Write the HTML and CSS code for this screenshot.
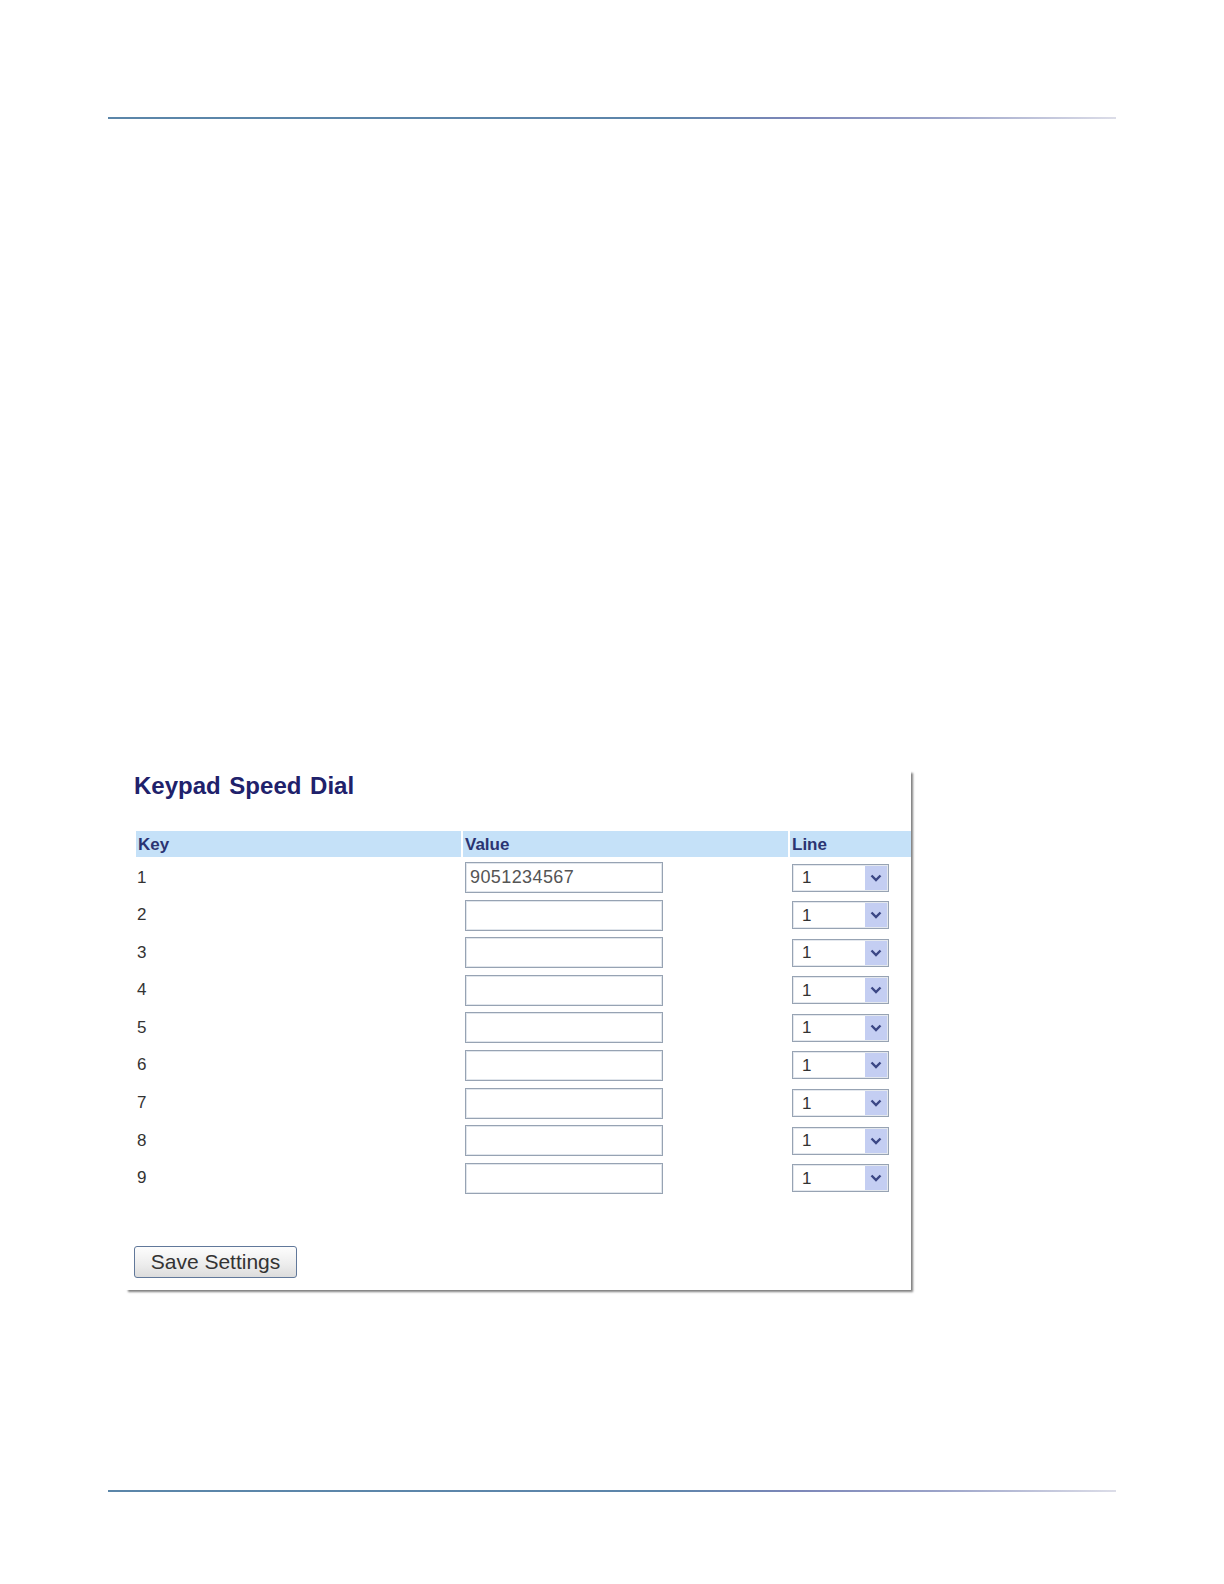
FILE: index.html
```html
<!DOCTYPE html>
<html>
<head>
<meta charset="utf-8">
<title>Keypad Speed Dial</title>
<link rel="stylesheet" href="styles.css">
</head>
<body>
  <div class="rule rule-top"></div>

  <div class="panel">
    <h2 class="panel-title">Keypad Speed Dial</h2>

    <div class="grid head">
      <div class="cell">Key</div>
      <div class="cell">Value</div>
      <div class="cell">Line</div>
    </div>

    <div class="rows" id="rows"></div>

    <button class="save-btn" type="button">Save Settings</button>
  </div>

  <div class="rule rule-bottom"></div>

  <script>
    var values = ["9051234567", "", "", "", "", "", "", "", ""];
    var rows = document.getElementById("rows");

    for (var i = 0; i < values.length; i++) {
      var row = document.createElement("div");
      row.className = "grid row";
      row.innerHTML =
        '<div class="key">' + (i + 1) + '</div>' +
        '<div><input class="value-box" type="text" value="' + values[i] + '"></div>' +
        '<div><div class="line-select"><select><option>1</option><option>2</option></select>' +
        '<span class="arrow"><svg width="12" height="8" viewBox="0 0 12 8"><path d="M1.5 1.5 L6 6 L10.5 1.5" fill="none" stroke="#3b4785" stroke-width="2.4"/></svg></span></div></div>';
      rows.appendChild(row);
    }
  </script>
</body>
</html>
```

FILE: styles.css
```css
body {
  margin: 0;
  padding: 0;
  background-color: #fff;
  font-family: "Liberation Sans", Arial, sans-serif;
  color: #333;
}

.rule {
  width: 1008px;
  height: 2px;
  margin-left: 108px;
  background: linear-gradient(to right, #5b86a9 0%, #5d85aa 55%, #7c86b8 68%, #9aa2c8 82%, #dcdde8 100%);
}

.rule-top {
  margin-top: 117px;
}

.rule-bottom {
  margin-top: 200px;
}

.panel {
  width: 777px;
  margin-top: 650px;
  margin-left: 124px;
  padding: 3px 0 12px 10px;
  background-color: #fff;
  box-shadow: 3px 3px 2px -1px rgba(0, 0, 0, 0.5);
}

.panel-title {
  margin: 0;
  font-size: 24px;
  line-height: 28px;
  word-spacing: 2px;
  font-weight: bold;
  color: #20216b;
}

.grid {
  display: grid;
  grid-template-columns: 325px 325px 121px;
  column-gap: 2px;
  margin-left: 2px;
}

.head {
  margin-top: 31px;
}

.head .cell {
  height: 24px;
  padding: 2px 0 0 2px;
  line-height: 24px;
  font-size: 17px;
  font-weight: bold;
  color: #2b3472;
  background-color: #c5e1f8;
}

.rows {
  display: flex;
  flex-direction: column;
  gap: 6.6px;
  margin-top: 5px;
}

.row {
  height: 31px;
  align-items: center;
}

.key {
  padding-left: 1px;
  font-size: 17px;
  color: #333;
}

.value-box {
  display: block;
  box-sizing: border-box;
  width: 198px;
  height: 31px;
  margin: 0 0 0 2px;
  padding: 0 4px;
  border: 1px solid #97a3b3;
  box-shadow: inset 0 0 0 1px #e1e6ec;
  border-radius: 0;
  font-family: "Liberation Sans", Arial, sans-serif;
  font-size: 18px;
  letter-spacing: 0.4px;
  color: #555;
  background-color: #fff;
  outline: none;
}

.line-select {
  position: relative;
  width: 97px;
  height: 28px;
  margin-left: 2px;
}

.line-select select {
  appearance: none;
  -webkit-appearance: none;
  box-sizing: border-box;
  width: 97px;
  height: 28px;
  margin: 0;
  padding: 0 0 0 9px;
  border: 1px solid #97a3b3;
  box-shadow: inset 0 0 0 1px #e4e8ee;
  border-radius: 0;
  background-color: #fff;
  font-family: "Liberation Sans", Arial, sans-serif;
  font-size: 17px;
  color: #333;
  outline: none;
}

.arrow {
  position: absolute;
  top: 2px;
  right: 2px;
  width: 22px;
  height: 24px;
  display: flex;
  align-items: center;
  justify-content: center;
  background-color: #c4cef2;
  pointer-events: none;
}

.save-btn {
  display: block;
  width: 163px;
  height: 32px;
  margin-top: 52px;
  padding: 0;
  border: 1px solid #61789a;
  border-radius: 3px;
  background: linear-gradient(#fdfdfd, #ececec 60%, #dcdcdc);
  font-family: "Liberation Sans", Arial, sans-serif;
  font-size: 21px;
  color: #333;
  cursor: pointer;
}
```
